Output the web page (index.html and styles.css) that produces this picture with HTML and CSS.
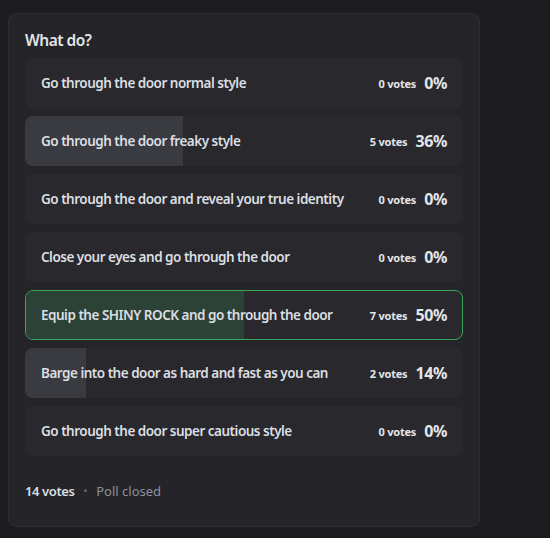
FILE: index.html
```html
<!DOCTYPE html>
<html>
<head>
<meta charset="utf-8">
<link rel="stylesheet" href="styles.css">
</head>
<body>
<div class="poll">
  <div class="question">What do?</div>
  <div class="options">
    <div class="option"><div class="fill" style="width:0%"></div><span class="label">Go through the door normal style</span><span class="votes">0 votes</span><span class="pct">0%</span></div>
    <div class="option"><div class="fill" style="width:36%"></div><span class="label">Go through the door freaky style</span><span class="votes">5 votes</span><span class="pct">36%</span></div>
    <div class="option"><div class="fill" style="width:0%"></div><span class="label">Go through the door and reveal your true identity</span><span class="votes">0 votes</span><span class="pct">0%</span></div>
    <div class="option"><div class="fill" style="width:0%"></div><span class="label">Close your eyes and go through the door</span><span class="votes">0 votes</span><span class="pct">0%</span></div>
    <div class="option winner"><div class="fill" style="width:50%"></div><span class="label">Equip the SHINY ROCK and go through the door</span><span class="votes">7 votes</span><span class="pct">50%</span></div>
    <div class="option"><div class="fill" style="width:14%"></div><span class="label">Barge into the door as hard and fast as you can</span><span class="votes">2 votes</span><span class="pct">14%</span></div>
    <div class="option"><div class="fill" style="width:0%"></div><span class="label">Go through the door super cautious style</span><span class="votes">0 votes</span><span class="pct">0%</span></div>
  </div>
  <div class="footer"><span class="total">14 votes</span><span class="dot">•</span><span class="status">Poll closed</span></div>
</div>
</body>
</html>
```

FILE: styles.css
```css
html, body {
  margin: 0;
  padding: 0;
  background: #1c1c20;
}
body {
  padding: 13px 0 0 8px;
  font-family: "Noto Sans", "Open Sans", sans-serif;
  color: #dbdee1;
}
.poll {
  box-sizing: border-box;
  width: 472px;
  height: 514px;
  background: #242429;
  border: 1px solid #2e2e33;
  border-radius: 8px;
  padding: 16px 16px 0 16px;
}
.question {
  font-size: 15.5px;
  font-weight: 600;
  line-height: 20px;
  letter-spacing: -0.5px;
  color: #e3e5e8;
  margin-bottom: 8px;
}
.options {
  display: flex;
  flex-direction: column;
  gap: 8px;
}
.option {
  position: relative;
  height: 50px;
  box-sizing: border-box;
  display: flex;
  align-items: center;
  padding: 0 16px;
  background: #28282d;
  border-radius: 8px;
  overflow: hidden;
}
.fill {
  position: absolute;
  left: 0;
  top: 0;
  bottom: 0;
  background: #3a3a41;
}
.option.winner {
  border: 1px solid #3ba55c;
  padding: 0 15px;
}
.option.winner .fill {
  background: #2d4236;
}
.label, .votes, .pct {
  position: relative;
}
.label {
  flex: 1;
  font-size: 13.5px;
  font-weight: 600;
  letter-spacing: -0.5px;
  color: #dbdee1;
}
.votes {
  font-size: 11px;
  font-weight: 700;
  letter-spacing: -0.2px;
  color: #e3e5e8;
  margin-right: 8px;
}
.pct {
  font-size: 16px;
  font-weight: 700;
  letter-spacing: -0.4px;
  color: #e3e5e8;
}
.footer {
  margin-top: 26px;
  display: flex;
  align-items: center;
  font-size: 13px;
  line-height: 18px;
}
.total {
  font-weight: 600;
  color: #dbdee1;
  letter-spacing: -0.4px;
}
.dot {
  color: #6d6f78;
  font-size: 10px;
  margin: 0 9px;
}
.status {
  color: #8e9099;
  font-weight: 400;
}
```
